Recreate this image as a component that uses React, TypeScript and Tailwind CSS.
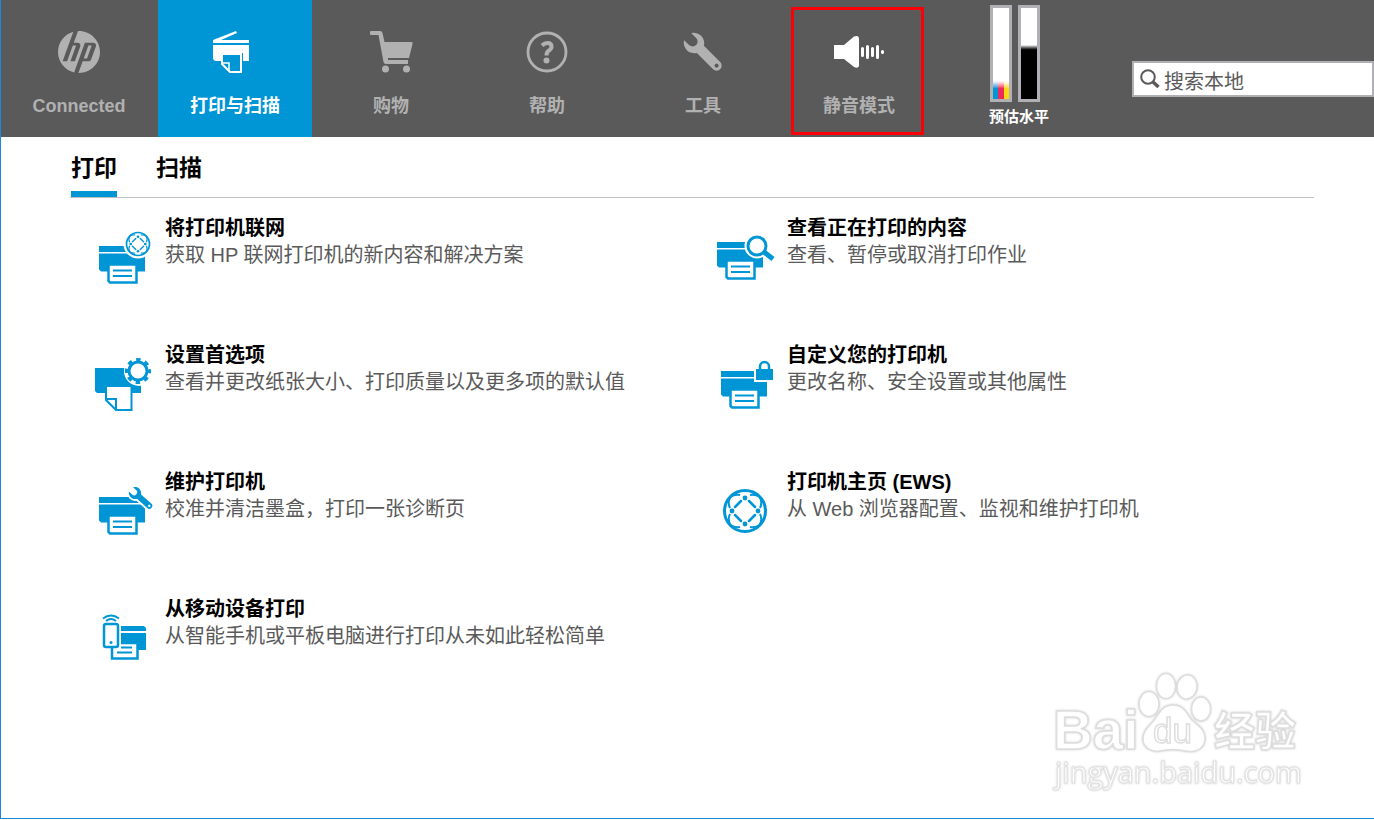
import { useState } from "react";
import type { ReactNode } from "react";
import { clsx } from "clsx";
import { SiHp } from "react-icons/si";

interface NavItem {
    id: string;
    label: string;
    icon: ReactNode;
}

interface Feature {
    title: string;
    description: string;
    icon: ReactNode;
}

const WRENCH =
    "M-9 -5 L-2 -5 A5 5 0 0 1 -2 5 L-9 5 A10.5 10.5 0 0 0 9 5 L32 5 A5 5 0 0 0 32 -5 L9 -5 A10.5 10.5 0 0 0 -9 -5 Z M34 0 A2 2 0 1 0 30 0 A2 2 0 1 0 34 0 Z";

function ScanPrinterIcon() {
    return (
        <svg width="44" height="42" viewBox="0 0 44 42" fill="currentColor" aria-hidden="true">
            <path d="M0 9 L23 0 L24 2 L8 9 H36 V12 H0 Z" />
            <path d="M0 14 H36 V30 H30 V22 H9 V30 H2 L0 28 Z" />
            <path d="M9 23 H28 V41 H17 L9 33 Z" fill="none" stroke="currentColor" strokeWidth="2" />
            <path d="M9 32 H16 V40" fill="none" stroke="currentColor" strokeWidth="1.5" />
        </svg>
    );
}

function CartIcon() {
    return (
        <svg width="43" height="42" viewBox="0 0 43 42" fill="currentColor" aria-hidden="true">
            <path d="M1 0 H10 Q12 0 12.500 2 L14.500 11 H41.500 Q43 11 42.500 13 L39 27 H18 V29 H38 V33 H16 Q14 33 13.500 31 L8.500 4 H1 Q0 4 0 3 V1 Q0 0 1 0 Z" />
            <circle cx="15.500" cy="38" r="3.500" />
            <circle cx="36.500" cy="38" r="3.500" />
        </svg>
    );
}

function HelpIcon() {
    return (
        <svg width="42" height="42" viewBox="0 0 42 42" fill="none" stroke="currentColor" aria-hidden="true">
            <circle cx="21" cy="21" r="19" strokeWidth="2.800" />
            <path d="M16 14.500 Q18.500 12 21.500 12 Q25.500 12 25.500 15.500 Q25.500 18 23 19.500 Q20.500 21 20.500 24.500" strokeWidth="4" />
            <circle cx="20.500" cy="29.500" r="3" fill="currentColor" stroke="none" />
        </svg>
    );
}

function WrenchIcon() {
    return (
        <svg width="42" height="42" viewBox="0 0 42 42" fill="currentColor" aria-hidden="true">
            <path d={WRENCH} fillRule="evenodd" transform="translate(12 12) rotate(45)" />
        </svg>
    );
}

function QuietIcon() {
    return (
        <svg width="52" height="42" viewBox="0 0 52 42" aria-hidden="true">
            <path d="M1 14 H11 L21 5.500 Q26 3.500 26 8 V34 Q26 38 21 36 L11 28 H1 Z" fill="#fff" />
            <g stroke="#fff" strokeWidth="3" strokeLinecap="round">
                <path d="M29.500 17.500 V24.500 M34.500 15.500 V26.500 M39.500 17.500 V24.500 M44.500 15.500 V26.500 M49.500 20.500 V21.500" />
            </g>
        </svg>
    );
}

// The printer body shared by most feature icons
function Printer({ x, y }: { x: number; y: number }) {
    return (
        <g transform={`translate(${x} ${y})`}>
            <path d="M0 0 H46 V6 H0 Z M0 7.500 H46 V25.500 H2 L0 23.500 Z" fill="currentColor" />
            <path d="M7.500 26 V35.500 L9.500 38" stroke="#fff" strokeWidth="1" />
            <path d="M9.500 18.500 H37.500 V36.500 H11 L9.500 35 Z" fill="#fff" stroke="currentColor" strokeWidth="2.500" />
            <path d="M14 24.500 H33 M14 30 H33" stroke="currentColor" strokeWidth="2" />
        </g>
    );
}

function Globe() {
    return (
        <g fill="none" stroke="currentColor">
            <circle r="20.500" strokeWidth="3" />
            <path
                d="M-10 -4 L-4 -10 M4 -10 L10 -4 M10 4 L4 10 M-4 10 L-10 4"
                strokeWidth="2.500"
                strokeLinecap="round"
            />
            <path
                d="M-15 -14 Q-10 -17 -5 -16 M5 -16 Q10 -17 15 -14 M-15 14 Q-10 17 -5 16 M5 16 Q10 17 15 14 M-14 -15 Q-18 -9 -15 -3 M-15 3 Q-18 9 -14 15 M14 -15 Q18 -9 15 -3 M15 3 Q18 9 14 15"
                strokeWidth="2"
            />
            <g fill="currentColor" stroke="none">
                <circle cy="-13" r="2.400" />
                <circle cx="13" r="2.400" />
                <circle cy="13" r="2.400" />
                <circle cx="-13" r="2.400" />
            </g>
        </g>
    );
}

function FeatureIcon({ children }: { children: ReactNode }) {
    return (
        <svg width="60" height="60" viewBox="0 0 60 60" className="mt-[15px] shrink-0 text-[#0096d6]" fill="none" aria-hidden="true">
            {children}
        </svg>
    );
}

const navItems: NavItem[] = [
    { id: "connected", label: "Connected", icon: <SiHp size={42} aria-hidden="true" /> },
    { id: "print-scan", label: "打印与扫描", icon: <ScanPrinterIcon /> },
    { id: "shop", label: "购物", icon: <CartIcon /> },
    { id: "help", label: "帮助", icon: <HelpIcon /> },
    { id: "tools", label: "工具", icon: <WrenchIcon /> },
    { id: "quiet", label: "静音模式", icon: <QuietIcon /> },
];

const printFeatures: Feature[] = [
    {
        title: "将打印机联网",
        description: "获取 HP 联网打印机的新内容和解决方案",
        icon: (
            <>
                <Printer x={6} y={18} />
                <circle cx="45" cy="16" r="14.500" fill="#fff" />
                <g transform="translate(45 16) scale(0.560)"><Globe /></g>
            </>
        ),
    },
    {
        title: "查看正在打印的内容",
        description: "查看、暂停或取消打印作业",
        icon: (
            <>
                <Printer x={2} y={14} />
                <circle cx="42" cy="18" r="12.500" fill="#fff" />
                <path d="M49 24 L58 31" stroke="#fff" strokeWidth="8" />
                <path d="M49 24 L58 31" stroke="currentColor" strokeWidth="5" />
                <circle cx="42" cy="18" r="9" fill="#fff" stroke="currentColor" strokeWidth="3" />
            </>
        ),
    },
    {
        title: "设置首选项",
        description: "查看并更改纸张大小、打印质量以及更多项的默认值",
        icon: (
            <>
                <path d="M2 13 H48 V38 H4 L2 36 Z" fill="currentColor" />
                <circle cx="46" cy="16" r="15" fill="#fff" />
                <path d="M13 31 H38.500 V55 H23 L13 45 Z" fill="#fff" stroke="currentColor" strokeWidth="2" />
                <path d="M13 44 H23 V55" stroke="currentColor" strokeWidth="2" />
                <circle cx="45" cy="16" r="9" stroke="currentColor" strokeWidth="3" />
                <circle cx="45" cy="16" r="11.500" stroke="currentColor" strokeWidth="3" strokeDasharray="4.500 4.532" strokeDashoffset="2.250" />
            </>
        ),
    },
    {
        title: "自定义您的打印机",
        description: "更改名称、安全设置或其他属性",
        icon: (
            <>
                <Printer x={6} y={16} />
                <path d="M39 12 H60 V27 H39 Z" fill="#fff" />
                <path d="M41 14 H58 V25 H41 Z" fill="currentColor" />
                <path d="M45 15 V11.500 A4.500 4.500 0 0 1 54 11.500 V15" stroke="currentColor" strokeWidth="2.500" />
            </>
        ),
    },
    {
        title: "维护打印机",
        description: "校准并清洁墨盒，打印一张诊断页",
        icon: (
            <>
                <Printer x={6} y={15} />
                <g transform="translate(42 11) rotate(42) scale(0.600)">
                    <path d={WRENCH} fill="#fff" stroke="#fff" strokeWidth="6" />
                    <path d={WRENCH} fill="currentColor" fillRule="evenodd" />
                </g>
            </>
        ),
    },
    {
        title: "打印机主页 (EWS)",
        description: "从 Web 浏览器配置、监视和维护打印机",
        icon: <g transform="translate(30 29)"><Globe /></g>,
    },
    {
        title: "从移动设备打印",
        description: "从智能手机或平板电脑进行打印从未如此轻松简单",
        icon: (
            <>
                <path d="M28 17 H51 L53 19 V22 H28 Z M28 24 H53 V41 H28 Z" fill="currentColor" />
                <path d="M17 34 H44 V50 H17 Z" fill="#fff" />
                <path d="M19 39 V49.500 H44.500 V34 H28" stroke="currentColor" strokeWidth="2.500" />
                <path d="M28 38.500 H39 M24 43.500 H39" stroke="currentColor" strokeWidth="2" />
                <rect x="11" y="15" width="14" height="23" rx="2" fill="#fff" stroke="currentColor" strokeWidth="2.500" />
                <circle cx="18" cy="33.500" r="1.500" fill="currentColor" />
                <path d="M10 9.500 Q18 3.500 26 9.500 M13 12 Q18 8 23 12" stroke="currentColor" strokeWidth="2" />
            </>
        ),
    },
];

const scanFeatures: Feature[] = [];

function InkLevels() {
    return (
        <div className="ml-[53px] flex w-[60px] shrink-0 flex-col items-start pt-[5px]">
            <div className="flex gap-1.5 pl-px">
                <div className="flex h-[97px] w-[22px] items-end border-3 border-[#b1b0b5] bg-white">
                    <div className="h-[18px] flex-1 bg-linear-to-b from-white to-[#0096d6] to-40%" />
                    <div className="h-[18px] flex-1 bg-linear-to-b from-white to-[#ee2a5d] to-40%" />
                    <div className="h-[18px] flex-1 bg-linear-to-b from-white to-[#fcd913] to-40%" />
                </div>
                <div className="flex h-[97px] w-[22px] items-end border-3 border-[#b1b0b5] bg-white">
                    <div className="h-[54px] flex-1 bg-linear-to-b from-white to-black to-10%" />
                </div>
            </div>
            <span className="mt-1 text-[15px] leading-[22px] font-bold whitespace-nowrap text-white">预估水平</span>
        </div>
    );
}

function Watermark() {
    return (
        <svg
            width="252"
            height="128"
            viewBox="0 0 252 128"
            className="pointer-events-none absolute right-[70px] bottom-[22px] drop-shadow-[0_0_1px_#cccccc]"
            fill="#fff"
            stroke="#dedede"
            strokeWidth="1.500"
            aria-hidden="true"
        >
            <text x="1" y="81" fontSize="55" fontWeight="bold" fontFamily="Liberation Sans, sans-serif">Bai</text>
            <ellipse cx="97" cy="36" rx="10" ry="12.500" />
            <ellipse cx="114" cy="18" rx="9.500" ry="12.500" />
            <ellipse cx="135" cy="19" rx="10" ry="12" transform="rotate(8 135 19)" />
            <ellipse cx="149" cy="41" rx="9.500" ry="12" />
            <path d="M121 37 C111 37 107 45 103 51 C98 58 91 62 91 71 C91 79 98 84 107 83 C116 81 126 81 134 83 C145 85 153 80 153 70 C153 60 144 57 139 51 C134 44 131 37 121 37 Z" />
            <text x="101" y="75" fontSize="35" fontFamily="Liberation Sans, sans-serif">du</text>
            <text x="162" y="78" fontSize="41" fontWeight="bold" fontFamily="Noto Sans CJK SC, sans-serif">经验</text>
            <text x="3" y="115" fontSize="29" strokeWidth="1" stroke="#e2e2e2" fontFamily="Open Sans, sans-serif">jingyan.baidu.com</text>
        </svg>
    );
}

export default function App() {
    const [activeNav, setActiveNav] = useState("print-scan");
    const [activeTab, setActiveTab] = useState("print");
    const [query, setQuery] = useState("");

    const tabs = [
        { id: "print", label: "打印" },
        { id: "scan", label: "扫描" },
    ];
    const features = activeTab === "print" ? printFeatures : scanFeatures;

    return (
        <div className="flex min-h-screen flex-col bg-white pb-px font-['Liberation_Sans','Noto_Sans_CJK_SC',sans-serif]">
            <div className="relative flex flex-1 flex-col border-b border-l border-[#1e88d8]">
                <header className="flex h-[137px] bg-[#5a5a5a]">
                    <nav className="ml-px flex shrink-0 gap-0.5">
                        {navItems.map((item) => (
                            <button
                                key={item.id}
                                type="button"
                                onClick={() => setActiveNav(item.id)}
                                className={clsx(
                                    "relative flex w-[154px] flex-col items-center pt-[31px] text-lg leading-6 font-bold",
                                    activeNav === item.id ? "bg-[#0096d6] text-white" : "text-[#b1b1b1]"
                                )}
                            >
                                {item.icon}
                                <span className="mt-[21px]">{item.label}</span>
                                {item.id === "quiet" && (
                                    <span className="absolute top-[7px] right-3 bottom-0.5 left-[9px] border-3 border-[#fb0007]" />
                                )}
                            </button>
                        ))}
                    </nav>

                    <InkLevels />

                    <label className="mt-[61px] ml-[83px] flex h-9 min-w-0 flex-1 items-center gap-1 border-2 border-[#b1b0b5] bg-white pl-1.5">
                        <svg width="20" height="20" viewBox="0 0 20 20" fill="none" stroke="#5a5a5a" className="shrink-0" aria-hidden="true">
                            <circle cx="8" cy="8" r="6.800" strokeWidth="2" />
                            <path d="M13 13 L18.500 18" strokeWidth="3.500" />
                        </svg>
                        <input
                            type="text"
                            aria-label="搜索本地"
                            placeholder="搜索本地"
                            value={query}
                            onChange={(e) => setQuery(e.target.value)}
                            className="h-full w-full min-w-0 pt-1.5 text-xl text-[#5a5a5a] outline-none placeholder:text-[#5a5a5a]"
                        />
                    </label>
                </header>

                <main className="pr-[60px] pl-[69px]">
                    <div role="tablist" className="flex gap-[38px] border-b border-[#c0c0c0]">
                        {tabs.map((tab) => (
                            <button
                                key={tab.id}
                                type="button"
                                role="tab"
                                aria-selected={activeTab === tab.id}
                                onClick={() => setActiveTab(tab.id)}
                                className={clsx(
                                    "ml-px h-[60px] border-b-6 pt-2 text-[23px] leading-8 font-bold text-black",
                                    activeTab === tab.id ? "border-[#0096d6]" : "border-transparent"
                                )}
                            >
                                {tab.label}
                            </button>
                        ))}
                    </div>

                    <ul className="mt-[15px] grid grid-cols-2 gap-y-[52px]">
                        {features.map((feature) => (
                            <li key={feature.title}>
                                <a href="#" className="flex gap-3 pl-[23px]">
                                    <FeatureIcon>{feature.icon}</FeatureIcon>
                                    <span className="pt-px text-xl leading-7 whitespace-nowrap">
                                        <span className="block font-bold text-black">{feature.title}</span>
                                        <span className="block leading-[27px] text-[#5a5a5a]">{feature.description}</span>
                                    </span>
                                </a>
                            </li>
                        ))}
                    </ul>
                </main>

                <Watermark />
            </div>
        </div>
    );
}
